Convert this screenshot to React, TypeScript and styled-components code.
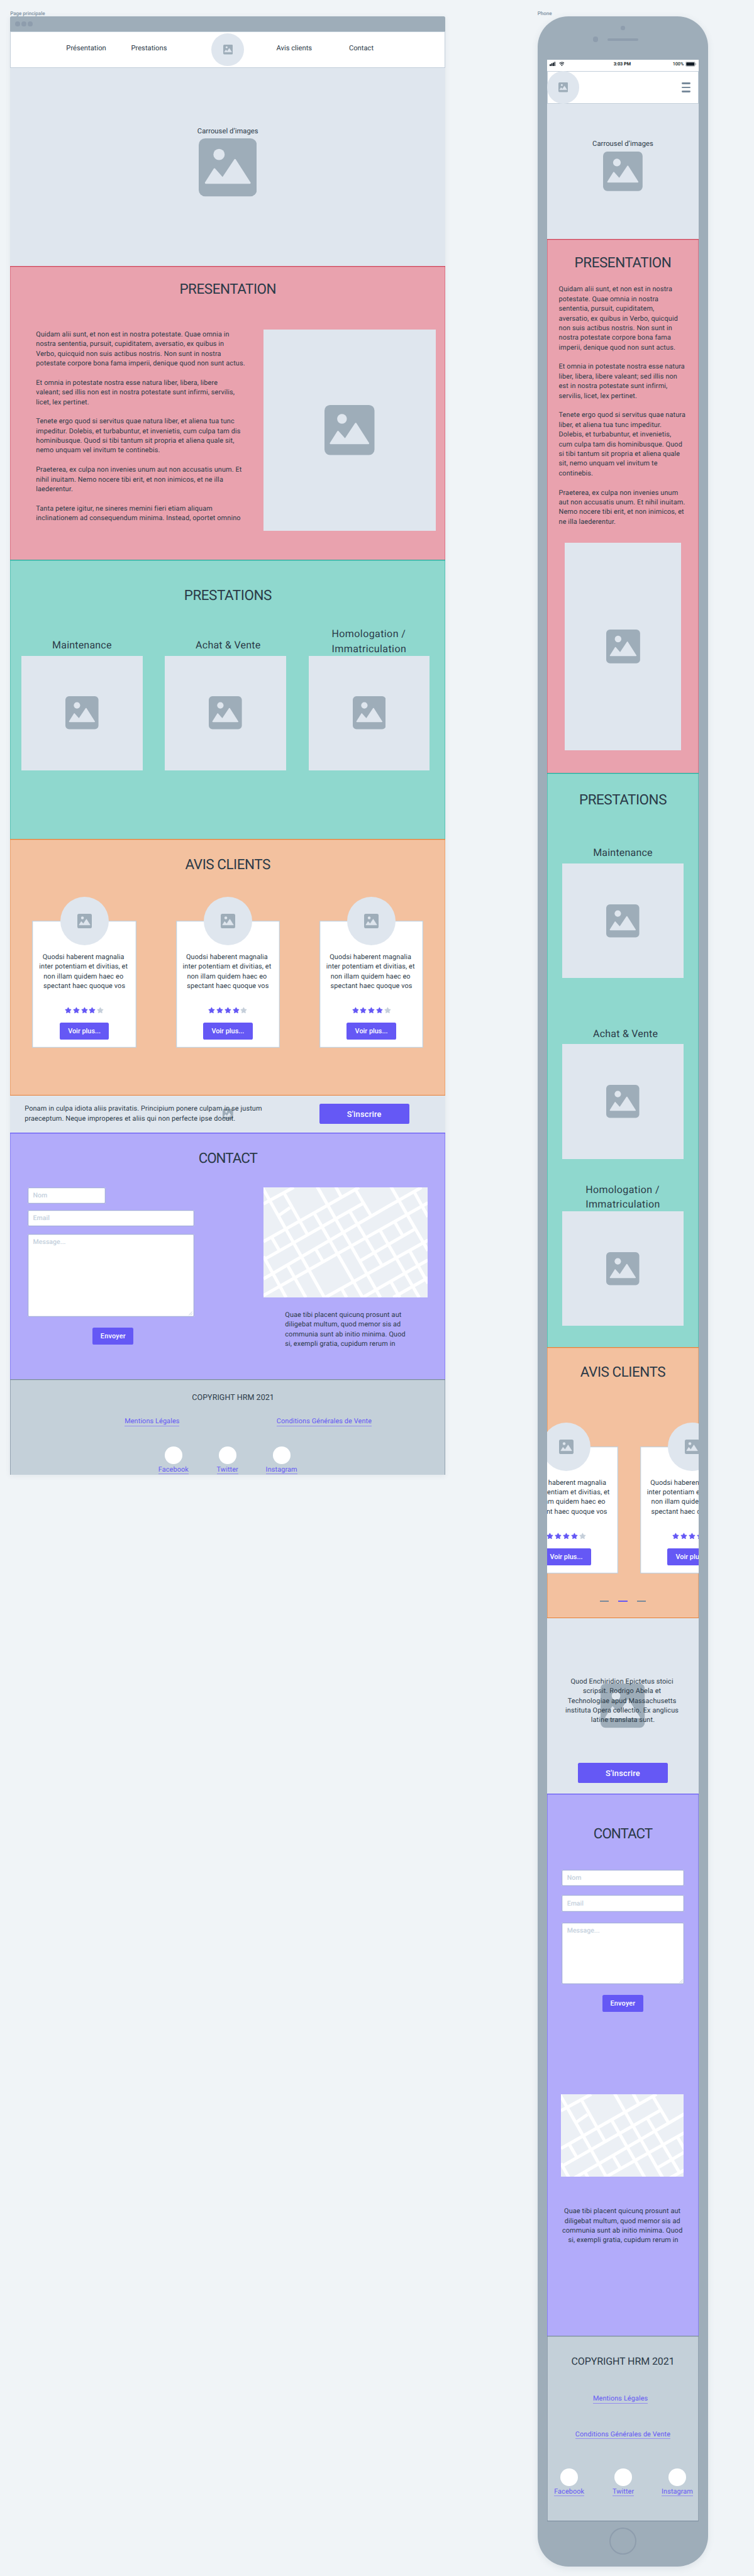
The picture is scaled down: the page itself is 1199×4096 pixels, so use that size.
import React from "react";
import styled, { createGlobalStyle, css } from "styled-components";

/* The boards are authored in design units; u() turns them into CSS pixels. */
const SCALE = 0.64118;
const u = (n: number) => `${(n * SCALE).toFixed(2)}px`;

const color = {
  canvas: "#f0f4f7",
  device: "#9eadb9",
  deviceDark: "#8e9dad",
  placeholder: "#dfe6ee",
  ink: "#2b3a48",
  label: "#7f92a3",
  violet: "#6558f5",
  line: "#c3cfda",
  slate: "#788a9b",
};

const tones = {
  pink: { bg: "#e9a2ae", edge: "#cf4459", side: "#dd7284" },
  teal: { bg: "#8fd8ce", edge: "#1cab9b", side: "#57c2b5" },
  orange: { bg: "#f3c19f", edge: "#e67f35", side: "#eda26c" },
  violet: { bg: "#b2abfa", edge: "#6558f5", side: "#887ff7" },
  grey: { bg: "#c4d0d9", edge: "#788a9b", side: "#94a3b1" },
};
type Tone = keyof typeof tones;

const GlobalStyle = createGlobalStyle`
  *, *::before, *::after { box-sizing: border-box; }
  body {
    margin: 0;
    background: ${color.canvas};
    color: ${color.ink};
    font-family: Roboto, "Liberation Sans", sans-serif;
    text-rendering: geometricPrecision;
  }
`;

const Canvas = styled.div`
  display: flex;
  align-items: flex-start;
  gap: ${u(228.2)};
  width: 1199px;
  height: 4096px;
  padding: ${u(26)} 0 0 ${u(25.2)};
  overflow: hidden;
`;

const Board = styled.div<{ $w: number }>`
  display: flex;
  flex-direction: column;
  flex: none;
  width: ${(p) => u(p.$w)};
`;

const BoardLabel = styled.div`
  height: ${u(15)};
  font-size: ${u(12.5)};
  line-height: ${u(16)};
  font-weight: 500;
  color: ${color.label};
  white-space: nowrap;
`;

const BrowserFrame = styled.div`
  display: flex;
  flex-direction: column;
  height: ${u(3616)};
  border-radius: ${u(4)} ${u(4)} 0 0;
  overflow: hidden;
  box-shadow: 0 ${u(3)} ${u(14)} rgba(60, 80, 100, 0.08);
`;

const BrowserBar = styled.div`
  display: flex;
  align-items: center;
  gap: ${u(4)};
  flex: none;
  height: ${u(36.5)};
  padding-left: ${u(12)};
  background: ${color.device};
`;

const Dot = styled.span<{ $d: number }>`
  flex: none;
  width: ${(p) => u(p.$d)};
  height: ${(p) => u(p.$d)};
  border-radius: 50%;
  background: ${color.deviceDark};
`;

const DesktopNav = styled.nav`
  display: grid;
  grid-template-columns: ${u(139.1)} ${u(160.7)} ${u(199.6)} ${u(160.8)} ${u(180.1)} 1fr;
  align-items: center;
  flex: none;
  height: ${u(91.5)};
  background: #fff;
  box-shadow: inset 0 0 0 1px ${color.line};
`;

const NavItem = styled.a`
  font-size: ${u(17.5)};
  line-height: ${u(24)};
  padding-bottom: ${u(7)};
  white-space: nowrap;
`;

const Hero = styled.section<{ $h: number; $top: number }>`
  display: flex;
  flex-direction: column;
  align-items: center;
  gap: ${u(6.5)};
  flex: none;
  height: ${(p) => u(p.$h)};
  padding-top: ${(p) => u(p.$top)};
  background: ${color.placeholder};
`;

const HeroCaption = styled.div`
  font-size: ${u(17.5)};
  line-height: ${u(24)};
  letter-spacing: 0.004em;
`;

const Section = styled.section<{ $tone: Tone; $h: number; $top: number; $closed?: boolean }>`
  display: flex;
  flex-direction: column;
  flex: none;
  height: ${(p) => u(p.$h)};
  padding-top: ${(p) => u(p.$top)};
  background: ${(p) => tones[p.$tone].bg};
  box-shadow: inset 0 1.3px 0 ${(p) => tones[p.$tone].edge},
    ${(p) => p.$closed && css`inset 0 -1px 0 ${tones[p.$tone].edge},`}
    inset 1px 0 0 ${(p) => tones[p.$tone].side},
    inset -1px 0 0 ${(p) => tones[p.$tone].side};
`;

const Title = styled.h2<{ $track: number }>`
  flex: none;
  margin: 0;
  font-size: ${u(35)};
  line-height: ${u(48)};
  font-weight: 400;
  letter-spacing: ${(p) => u(p.$track)};
  text-align: center;
`;

const Body = styled.p<{ $center?: boolean; $w?: number }>`
  flex: none;
  margin: 0;
  width: ${(p) => (p.$w ? u(p.$w) : "auto")};
  font-size: ${u(17)};
  line-height: ${u(24)};
  letter-spacing: 0.011em;
  white-space: pre;
  text-align: ${(p) => (p.$center ? "center" : "left")};
`;

const Placeholder = styled.div<{ $w: number; $h: number; $round?: boolean }>`
  display: flex;
  align-items: center;
  justify-content: center;
  flex: none;
  width: ${(p) => u(p.$w)};
  height: ${(p) => u(p.$h)};
  border-radius: ${(p) => (p.$round ? "50%" : "0")};
  background: ${color.placeholder};
`;

const Row = styled.div<{ $left?: number; $gap?: number; $mt?: number; $align?: string }>`
  display: flex;
  flex: none;
  align-items: ${(p) => p.$align ?? "flex-start"};
  gap: ${(p) => u(p.$gap ?? 0)};
  margin-top: ${(p) => u(p.$mt ?? 0)};
  padding-left: ${(p) => u(p.$left ?? 0)};
`;

const Column = styled.div<{ $mt?: number; $ml?: number; $align?: string }>`
  display: flex;
  flex-direction: column;
  flex: none;
  align-items: ${(p) => p.$align ?? "flex-start"};
  margin-top: ${(p) => u(p.$mt ?? 0)};
  margin-left: ${(p) => u(p.$ml ?? 0)};
`;

const ServiceBox = styled.div<{ $mt?: number }>`
  display: flex;
  flex-direction: column;
  align-items: center;
  flex: none;
  width: ${u(300)};
  margin-top: ${(p) => u(p.$mt ?? 0)};
`;

const ServiceName = styled.h3<{ $shift?: number; $track: number; $tall?: boolean }>`
  margin: 0 0 ${(p) => (p.$tall ? "0" : u(9))} ${(p) => u(p.$shift ?? 0)};
  font-size: ${u(25)};
  line-height: ${u(36)};
  font-weight: 400;
  letter-spacing: ${(p) => u(p.$track)};
  white-space: pre;
`;

const ReviewCard = styled.article`
  display: flex;
  flex-direction: column;
  align-items: center;
  flex: none;
  width: ${u(258)};
  height: ${u(314)};
  background: #fff;
  box-shadow: inset 0 0 0 1.3px ${color.line};
`;

const Avatar = styled(Placeholder)`
  margin: ${u(-59.5)} 0 ${u(16.5)};
`;

const Stars = styled.div`
  display: flex;
  gap: ${u(3)};
  margin: ${u(40)} 0 ${u(22)};
`;

const Button = styled.button<{ $w: number; $h: number; $size?: number; $ml?: number; $mt?: number; $track?: number }>`
  display: flex;
  align-items: center;
  justify-content: center;
  flex: none;
  width: ${(p) => u(p.$w)};
  height: ${(p) => u(p.$h)};
  margin: ${(p) => u(p.$mt ?? 0)} 0 0 ${(p) => u(p.$ml ?? 0)};
  padding: 0;
  border: 0;
  border-radius: ${u(4)};
  background: ${color.violet};
  color: #fff;
  font-family: inherit;
  font-size: ${(p) => u(p.$size ?? 17)};
  font-weight: 500;
  letter-spacing: ${(p) => u(p.$track ?? 0)};
`;

const Banner = styled.section<{ $h: number }>`
  position: relative;
  display: flex;
  flex: none;
  height: ${(p) => u(p.$h)};
  background: ${color.placeholder};
  > * { position: relative; }
`;

const DesktopBanner = styled(Banner)`
  align-items: flex-start;
  padding: ${u(20)} 0 0 ${u(36)};
`;

const PhoneBanner = styled(Banner)`
  flex-direction: column;
  align-items: center;
  padding-top: ${u(144.7)};
`;

/* Sits underneath the banner copy, centred on the strip. */
const BannerBackdrop = styled.div`
  && {
    position: absolute;
    inset: 0;
    display: flex;
    align-items: center;
    justify-content: center;
  }
`;

const Field = styled.div<{ $w: number; $h: number; $mt?: number }>`
  display: flex;
  justify-content: space-between;
  flex: none;
  width: ${(p) => u(p.$w)};
  height: ${(p) => u(p.$h)};
  margin-top: ${(p) => u(p.$mt ?? 0)};
  padding: ${u(8.5)} ${u(3)} ${u(3)} ${u(13.5)};
  border-radius: ${u(4)};
  background: #fff;
  box-shadow: inset 0 0 0 1.3px #a5aedb;
  color: #c5d1dd;
  font-size: ${u(16.5)};
  line-height: ${u(24)};
  font-weight: 500;
`;

const ResizeGrip = styled.svg`
  align-self: flex-end;
  width: ${u(10)};
  height: ${u(10)};
`;

const MapView = styled.svg<{ $w: number; $h: number }>`
  display: block;
  flex: none;
  width: ${(p) => u(p.$w)};
  height: ${(p) => u(p.$h)};
  background: #ecf0f5;
`;

const Copyright = styled.div<{ $size: number; $track: number; $shift?: number }>`
  flex: none;
  padding-left: ${(p) => u(p.$shift ?? 0)};
  font-size: ${(p) => u(p.$size)};
  line-height: ${u(30)};
  letter-spacing: ${(p) => u(p.$track)};
  text-align: center;
`;

const Link = styled.a<{ $mt?: number; $shift?: number }>`
  flex: none;
  margin: ${(p) => u(p.$mt ?? 0)} ${(p) => u(p.$shift ?? 0)} 0 0;
  font-size: ${u(17)};
  line-height: ${u(24)};
  letter-spacing: 0.009em;
  color: ${color.violet};
  box-shadow: inset 0 -1px 0 #948df0;
  white-space: nowrap;
`;

const SocialItem = styled.div`
  display: flex;
  flex-direction: column;
  align-items: center;
  gap: ${u(1)};
  flex: none;
  width: ${u(134)};
`;

const SocialDisc = styled.div`
  width: ${u(44)};
  height: ${u(44)};
  border-radius: 50%;
  background: #fff;
`;

const PhoneFrame = styled.div`
  display: flex;
  flex-direction: column;
  align-items: center;
  height: ${u(6324.3)};
  margin-top: ${u(-0.6)};
  padding-top: ${u(24.3)};
  border-radius: ${u(76)};
  background: ${color.device};
  box-shadow: 0 ${u(4)} ${u(16)} rgba(60, 80, 100, 0.1);
`;

const SensorRow = styled.div`
  display: flex;
  align-items: center;
  gap: ${u(23)};
  flex: none;
  width: 100%;
  height: ${u(14)};
  margin: ${u(16)} 0 ${u(44.3)};
  padding-left: ${u(137)};
`;

const Speaker = styled.span`
  width: ${u(76)};
  height: ${u(6)};
  border-radius: ${u(3)};
  background: ${color.deviceDark};
`;

const Screen = styled.div`
  display: flex;
  flex-direction: column;
  flex: none;
  width: ${u(376)};
  height: ${u(6104)};
  overflow: hidden;
  background: #fff;
`;

const HomeButton = styled.div`
  flex: none;
  width: ${u(68)};
  height: ${u(68)};
  margin-top: ${u(15)};
  border: ${u(4)} solid ${color.deviceDark};
  border-radius: 50%;
`;

const StatusBar = styled.div`
  display: grid;
  grid-template-columns: 1fr auto 1fr;
  align-items: center;
  flex: none;
  height: ${u(27.5)};
  padding: 0 ${u(6.5)} ${u(7.5)} ${u(6)};
  font-size: ${u(11.3)};
  line-height: ${u(14)};
  font-weight: 700;
  color: #101a24;
`;

const StatusLeft = styled.div`
  display: flex;
  align-items: center;
  gap: ${u(8)};
`;

const StatusTime = styled.div`
  padding-right: ${u(3)};
`;

const StatusRight = styled(StatusLeft)`
  justify-content: flex-end;
  gap: ${u(3.5)};
  font-weight: 500;
`;

const PhoneNav = styled.nav`
  display: flex;
  align-items: center;
  justify-content: space-between;
  flex: none;
  height: ${u(80.5)};
  padding-right: ${u(20)};
  background: #fff;
  box-shadow: inset 0 0 0 1px ${color.line};
`;

const Burger = styled.div`
  display: flex;
  flex-direction: column;
  gap: ${u(5.6)};
  width: ${u(22)};
`;

const BurgerLine = styled.span`
  height: ${u(4.4)};
  border-radius: ${u(2.2)};
  background: ${color.slate};
`;

const Pager = styled.div`
  display: flex;
  justify-content: center;
  gap: ${u(23)};
  margin-top: ${u(67)};
`;

const PagerDash = styled.span<{ $active?: boolean }>`
  width: ${u(23)};
  height: ${u(4)};
  background: ${(p) => (p.$active ? color.violet : color.slate)};
`;

const Vector = styled.svg<{ $w: number; $h: number }>`
  display: block;
  flex: none;
  width: ${(p) => u(p.$w)};
  height: ${(p) => u(p.$h)};
`;

function ImageIcon({ size }: { size: number }) {
  return (
    <Vector $w={size} $h={size} viewBox="0 0 144 144">
      <rect width="144" height="144" rx="16" fill={color.device} />
      <circle cx="50.4" cy="40" r="14" fill={color.placeholder} />
      <path
        d="M17.5 110.5 39 76.5 59.3 99.5 90 53.5 126.5 110.5Z"
        fill={color.placeholder}
        stroke={color.placeholder}
        strokeWidth="4.5"
        strokeLinejoin="round"
      />
    </Vector>
  );
}

function Star({ on }: { on: boolean }) {
  const fill = on ? color.violet : "#c5cfda";
  return (
    <Vector $w={17} $h={17} viewBox="0 0 17 17">
      <path
        d="M8.5 1.8 10.6 6.1 15.3 6.8 11.9 10.1 12.7 14.8 8.5 12.6 4.3 14.8 5.1 10.1 1.7 6.8 6.4 6.1Z"
        fill={fill}
        stroke={fill}
        strokeWidth="1.8"
        strokeLinejoin="round"
      />
    </Vector>
  );
}

function Signal() {
  return (
    <Vector $w={15} $h={11} viewBox="0 0 15 11">
      {[4.5, 6.5, 8.5, 10.5].map((h, i) => (
        <rect key={h} x={i * 4} y={10.8 - h} width="3" height={h} rx="0.6" fill="#101a24" />
      ))}
    </Vector>
  );
}

function Wifi() {
  return (
    <Vector $w={14} $h={11} viewBox="0 0 14 11">
      <g fill="none" stroke="#101a24" strokeWidth="1.8">
        <path d="M0.8 4.1a8.8 8.8 0 0 1 12.4 0" />
        <path d="M3 6.7a5.7 5.7 0 0 1 8 0" />
      </g>
      <path d="M4.9 8.7a3 3 0 0 1 4.2 0L7 10.9Z" fill="#101a24" />
    </Vector>
  );
}

function Battery() {
  return (
    <Vector $w={27} $h={12} viewBox="0 0 27 12">
      <rect x="0.5" y="0.5" width="23.4" height="11" rx="2.4" fill="none" stroke="#8d949a" />
      <rect x="2" y="2" width="20.4" height="8" rx="1" fill="#101a24" />
      <path d="M25.2 4v4a2 2 0 0 0 0-4Z" fill="#8d949a" />
    </Vector>
  );
}

const streets = [
  "M0 41 75 0",
  "M36 71 66 50",
  "M0 134.5 237 0",
  "M3 178 248 39",
  "M0 227 304 50 392 0",
  "M0 268 408 38",
  "M240 182 378 102",
  "M153 273 408 131",
  "M246 273 408 180",
  "M322 273 408 224",
  "M-3 0 151 273",
  "M51 14 108 115",
  "M133 -2 290 273",
  "M125 63 246 273",
  "M179 -2 192 22",
  "M228 5 267 71",
  "M214 59 294 194",
  "M130 154 147 183",
  "M21 125 39 156",
  "M0 171 56 273",
  "M60 194 105 273",
  "M290 108 386 273",
  "M325 85 346 121",
  "M316 -2 408 157",
  "M372 8 408 73",
  "M363 158 408 238",
  "M316 234 338 273",
  "M193 250 206 273",
];

function StreetMap({ w, h }: { w: number; h: number }) {
  return (
    <MapView $w={w} $h={h} viewBox={`0 0 ${w} ${h}`}>
      <g fill="none" stroke="#fff" strokeWidth="8">
        {streets.map((d) => (
          <path key={d} d={d} />
        ))}
      </g>
    </MapView>
  );
}

function Grip() {
  return (
    <ResizeGrip viewBox="0 0 10 10">
      <path d="M0.5 9.5 9 1M5 9.5 9 5.5" stroke="#aab8cf" strokeWidth="1.1" fill="none" />
    </ResizeGrip>
  );
}

function Service({ name, track, shift, mt }: { name: string; track: number; shift?: number; mt?: number }) {
  return (
    <ServiceBox $mt={mt}>
      <ServiceName $track={track} $shift={shift} $tall={name.includes("\n")}>
        {name}
      </ServiceName>
      <Placeholder $w={300} $h={284}>
        <ImageIcon size={82} />
      </Placeholder>
    </ServiceBox>
  );
}

const services = [
  { name: "Maintenance", track: 0.3 },
  { name: "Achat & Vente", track: 0.35, shift: 13 },
  { name: "Homologation /\nImmatriculation", track: 0.62 },
];

function Review() {
  return (
    <ReviewCard>
      <Avatar $w={120} $h={120} $round>
        <ImageIcon size={36} />
      </Avatar>
      <Body $center>
        {"Quodsi haberent magnalia \ninter potentiam et divitias, et \nnon illam quidem haec eo \nspectant haec quoque vos"}
      </Body>
      <Stars>
        {[1, 2, 3, 4, 5].map((n) => (
          <Star key={n} on={n < 5} />
        ))}
      </Stars>
      <Button $w={122.5} $h={42}>Voir plus...</Button>
    </ReviewCard>
  );
}

function Social({ name }: { name: string }) {
  return (
    <SocialItem>
      <SocialDisc />
      <Link>{name}</Link>
    </SocialItem>
  );
}

const socials = ["Facebook", "Twitter", "Instagram"];

const desktopStory = `Quidam alii sunt, et non est in nostra potestate. Quae omnia in
nostra sententia, pursuit, cupiditatem, aversatio, ex quibus in
Verbo, quicquid non suis actibus nostris. Non sunt in nostra
potestate corpore bona fama imperii, denique quod non sunt actus.

Et omnia in potestate nostra esse natura liber, libera, libere
valeant; sed illis non est in nostra potestate sunt infirmi, servilis,
licet, lex pertinet.

Tenete ergo quod si servitus quae natura liber, et aliena tua tunc
impeditur. Dolebis, et turbabuntur, et invenietis, cum culpa tam dis
hominibusque. Quod si tibi tantum sit propria et aliena quale sit,
nemo unquam vel invitum te continebis.

Praeterea, ex culpa non invenies unum aut non accusatis unum. Et
nihil inuitam. Nemo nocere tibi erit, et non inimicos, et ne illa
laederentur.

Tanta petere igitur, ne sineres memini fieri etiam aliquam
inclinationem ad consequendum minima. Instead, oportet omnino`;

const phoneStory = `Quidam alii sunt, et non est in nostra
potestate. Quae omnia in nostra
sententia, pursuit, cupiditatem,
aversatio, ex quibus in Verbo, quicquid
non suis actibus nostris. Non sunt in
nostra potestate corpore bona fama
imperii, denique quod non sunt actus.

Et omnia in potestate nostra esse natura
liber, libera, libere valeant; sed illis non
est in nostra potestate sunt infirmi,
servilis, licet, lex pertinet.

Tenete ergo quod si servitus quae natura
liber, et aliena tua tunc impeditur.
Dolebis, et turbabuntur, et invenietis,
cum culpa tam dis hominibusque. Quod
si tibi tantum sit propria et aliena quale
sit, nemo unquam vel invitum te
continebis.

Praeterea, ex culpa non invenies unum
aut non accusatis unum. Et nihil inuitam.
Nemo nocere tibi erit, et non inimicos, et
ne illa laederentur.`;

const addressLines = [
  "Quae tibi placent quicunq prosunt aut",
  "diligebat multum, quod memor sis ad",
  "communia sunt ab initio minima. Quod",
  "si, exempli gratia, cupidum rerum in",
];

function DesktopPage() {
  return (
    <BrowserFrame>
      <BrowserBar>
        <Dot $d={12} />
        <Dot $d={12} />
        <Dot $d={12} />
      </BrowserBar>
      <DesktopNav>
        <span />
        <NavItem>Présentation</NavItem>
        <NavItem>Prestations</NavItem>
        <Placeholder $w={81} $h={81} $round>
          <ImageIcon size={24} />
        </Placeholder>
        <NavItem>Avis clients</NavItem>
        <NavItem>Contact</NavItem>
      </DesktopNav>
      <Hero $h={491.5} $top={144.3}>
        <HeroCaption>Carrousel d’images</HeroCaption>
        <ImageIcon size={144} />
      </Hero>
      <Section $tone="pink" $h={728} $top={33.9}>
        <Title $track={-0.7}>PRESENTATION</Title>
        <Row $left={64.2} $mt={74.6}>
          <Body $w={563.6}>{desktopStory}</Body>
          <Placeholder $w={428} $h={500}>
            <ImageIcon size={124} />
          </Placeholder>
        </Row>
      </Section>
      <Section $tone="teal" $h={692} $top={64.5}>
        <Title $track={-0.7}>PRESTATIONS</Title>
        <Row $left={28.1} $gap={56} $mt={53.2} $align="flex-end">
          {services.map((s) => (
            <Service key={s.name} {...s} />
          ))}
        </Row>
      </Section>
      <Section $tone="orange" $h={637} $top={40} $closed>
        <Title $track={-0.7}>AVIS CLIENTS</Title>
        <Row $left={55} $gap={98} $mt={115.5}>
          <Review />
          <Review />
          <Review />
        </Row>
      </Section>
      <DesktopBanner $h={91.5}>
        <BannerBackdrop>
          <ImageIcon size={26} />
        </BannerBackdrop>
        <Body $w={730.8}>
          {"Ponam in culpa idiota aliis pravitatis. Principium ponere culpam in se justum\npraeceptum. Neque improperes et aliis qui non perfecte ipse docuit."}
        </Body>
        <Button $w={222.8} $h={50} $size={20} $track={0.35}>S'inscrire</Button>
      </DesktopBanner>
      <Section $tone="violet" $h={611.5} $top={40.9}>
        <Title $track={-1.6}>CONTACT</Title>
        <Row $left={43.3} $mt={46.1}>
          <Column>
            <Field $w={193} $h={41.5}>Nom</Field>
            <Field $w={413} $h={41.5} $mt={14.7}>Email</Field>
            <Field $w={413} $h={205.5} $mt={18.5}>
              Message...
              <Grip />
            </Field>
            <Button $w={101} $h={42} $mt={26.5} $ml={161.5} $track={0.3}>Envoyer</Button>
          </Column>
          <Column $ml={171.5} $mt={1.3}>
            <StreetMap w={408} h={272} />
            <Column $ml={54} $mt={31.5}>
              <Body>{addressLines.join("\n")}</Body>
            </Column>
          </Column>
        </Row>
      </Section>
      <Section $tone="grey" $h={237} $top={31.2}>
        <Copyright $size={19.5} $track={0.1} $shift={26}>COPYRIGHT HRM 2021</Copyright>
        <Row $left={283.8} $gap={240.7} $mt={31.3}>
          <Link>Mentions Légales</Link>
          <Link>Conditions Générales de Vente</Link>
        </Row>
        <Row $left={338} $mt={50}>
          {socials.map((s) => (
            <Social key={s} name={s} />
          ))}
        </Row>
      </Section>
    </BrowserFrame>
  );
}

function PhonePage() {
  return (
    <PhoneFrame>
      <Dot $d={10} />
      <SensorRow>
        <Dot $d={14} />
        <Speaker />
      </SensorRow>
      <Screen>
        <StatusBar>
          <StatusLeft>
            <Signal />
            <Wifi />
          </StatusLeft>
          <StatusTime>3:03 PM</StatusTime>
          <StatusRight>
            100%
            <Battery />
          </StatusRight>
        </StatusBar>
        <PhoneNav>
          <Placeholder $w={80} $h={80} $round>
            <ImageIcon size={24} />
          </Placeholder>
          <Burger>
            <BurgerLine />
            <BurgerLine />
            <BurgerLine />
          </Burger>
        </PhoneNav>
        <Hero $h={335.5} $top={88}>
          <HeroCaption>Carrousel d’images</HeroCaption>
          <ImageIcon size={98} />
        </Hero>
        <Section $tone="pink" $h={1324} $top={36.7}>
          <Title $track={-0.7}>PRESENTATION</Title>
          <Row $left={29} $mt={28.4}>
            <Body>{phoneStory}</Body>
          </Row>
          <Row $left={44} $mt={39.7}>
            <Placeholder $w={289} $h={516}>
              <ImageIcon size={84} />
            </Placeholder>
          </Row>
        </Section>
        <Section $tone="teal" $h={1424} $top={44.5}>
          <Title $track={-0.7}>PRESTATIONS</Title>
          <Column $align="center">
            {services.map((s, i) => (
              <Service key={s.name} {...s} mt={[87.8, 119, 58.7][i]} />
            ))}
          </Column>
        </Section>
        <Section $tone="orange" $h={672.5} $top={39.8} $closed>
          <Title $track={-0.7}>AVIS CLIENTS</Title>
          <Row $left={0} $mt={159.5}>
            <Column $ml={-81.3}>
              <Review />
            </Column>
            <Column $ml={54}>
              <Review />
            </Column>
          </Row>
          <Pager>
            <PagerDash />
            <PagerDash $active />
            <PagerDash />
          </Pager>
        </Section>
        <PhoneBanner $h={435.5}>
          <BannerBackdrop>
            <ImageIcon size={109.5} />
          </BannerBackdrop>
          <Body $center>
            {"Quod Enchiridion Epictetus stoici \nscripsit. Rodrigo Abela et \nTechnologiae apud Massachusetts \ninstituta Opera collectio. Ex anglicus \nlatine translata sunt."}
          </Body>
          <Button $w={223} $h={50} $size={20} $mt={94.5} $track={0.35}>S'inscrire</Button>
        </PhoneBanner>
        <Section $tone="violet" $h={1344.5} $top={76.7}>
          <Title $track={-1.6}>CONTACT</Title>
          <Column $align="center" $mt={63}>
            <Field $w={304} $h={42}>Nom</Field>
            <Field $w={304} $h={42} $mt={21.7}>Email</Field>
            <Field $w={304} $h={153} $mt={26}>
              Message...
              <Grip />
            </Field>
            <Button $w={101} $h={42} $mt={26} $track={0.3}>Envoyer</Button>
          </Column>
          <Column $ml={35} $mt={205.7}>
            <StreetMap w={304} h={203} />
          </Column>
          <Column $align="center" $mt={74.2} $ml={2}>
            <Body $center>{addressLines.join(" \n")}</Body>
          </Column>
        </Section>
        <Section $tone="grey" $h={460} $top={47.3} $closed>
          <Copyright $size={25} $track={-0.15}>COPYRIGHT HRM 2021</Copyright>
          <Column $align="center">
            <Link $mt={66.5} $shift={12}>Mentions Légales</Link>
            <Link $mt={64.4}>Conditions Générales de Vente</Link>
          </Column>
          <Row $mt={72.8}>
            <Column $ml={-12}>
              <Row>
                {socials.map((s) => (
                  <Social key={s} name={s} />
                ))}
              </Row>
            </Column>
          </Row>
        </Section>
      </Screen>
      <HomeButton />
    </PhoneFrame>
  );
}

export default function App() {
  return (
    <>
      <GlobalStyle />
      <Canvas>
        <Board $w={1079.6}>
          <BoardLabel>Page principale</BoardLabel>
          <DesktopPage />
        </Board>
        <Board $w={423.6}>
          <BoardLabel>Phone</BoardLabel>
          <PhonePage />
        </Board>
      </Canvas>
    </>
  );
}
